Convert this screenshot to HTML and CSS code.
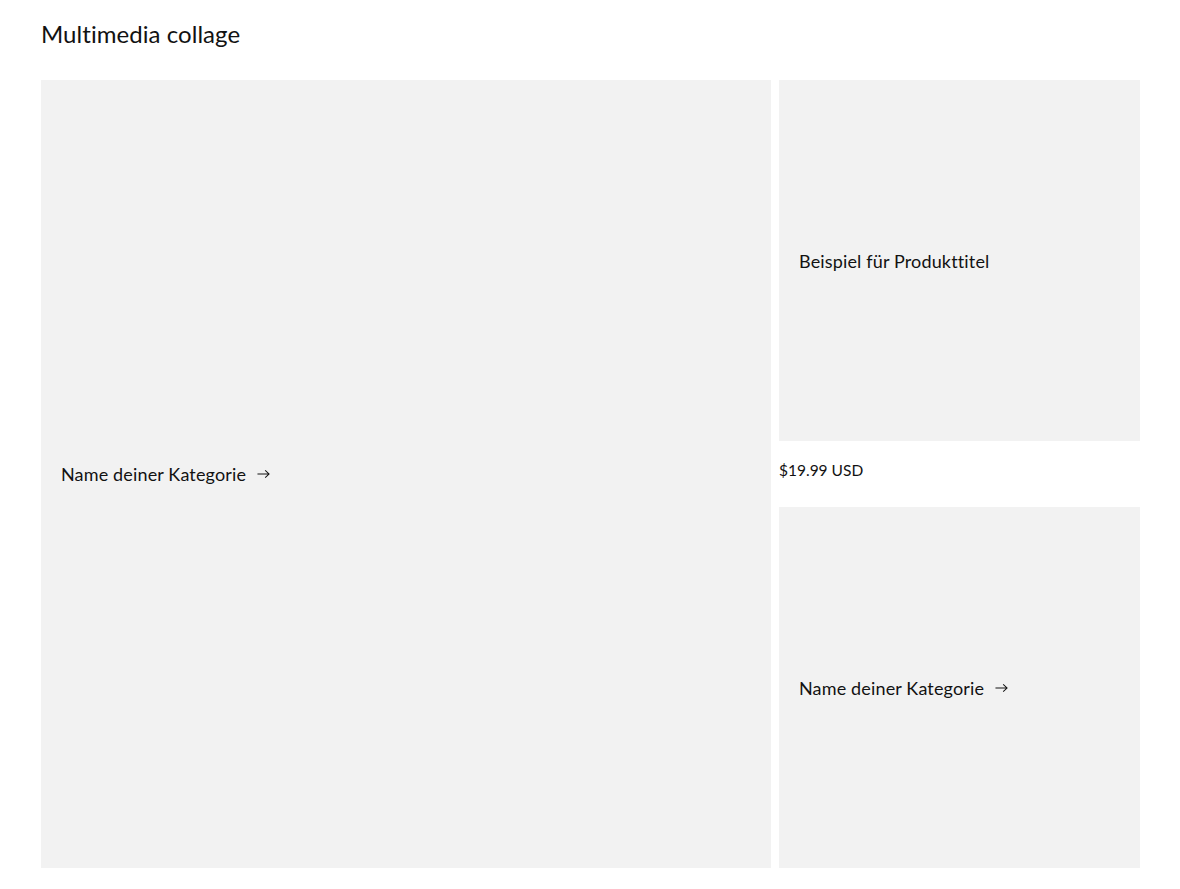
FILE: index.html
```html
<!DOCTYPE html>
<html lang="de">
<head>
<meta charset="utf-8">
<title>Multimedia collage</title>
<link rel="stylesheet" href="styles.css">
</head>
<body>
<section class="collage-section">
  <h2 class="title">Multimedia collage</h2>
  <div class="collage">
    <a class="card card-large" href="#">
      <span class="card-label">Name deiner Kategorie
        <svg class="arrow" viewBox="0 0 14 10" width="13" height="10" aria-hidden="true"><path d="M0.5 5H13M8.8 1L13 5L8.8 9" fill="none" stroke="currentColor" stroke-width="1.1"/></svg>
      </span>
    </a>
    <div class="side">
      <a class="card card-square" href="#">
        <span class="card-label">Beispiel für Produkttitel</span>
      </a>
      <div class="price">$19.99 USD</div>
      <a class="card card-square" href="#">
        <span class="card-label">Name deiner Kategorie
          <svg class="arrow" viewBox="0 0 14 10" width="13" height="10" aria-hidden="true"><path d="M0.5 5H13M8.8 1L13 5L8.8 9" fill="none" stroke="currentColor" stroke-width="1.1"/></svg>
        </span>
      </a>
    </div>
  </div>
</section>
</body>
</html>
```

FILE: styles.css
```css
* { box-sizing: border-box; }
html, body { margin: 0; padding: 0; background: #ffffff; }
body {
  font-family: Lato, "Noto Sans", sans-serif;
  color: #121212;
}
.collage-section {
  padding: 0 40px 0 41px;
}
.title {
  margin: 0;
  padding-top: 16px;
  height: 80px;
  font-size: 24px;
  font-weight: 400;
  letter-spacing: 0.05px;
  line-height: 36px;
}
.collage {
  display: grid;
  grid-template-columns: 730px 361px;
  column-gap: 8px;
  height: 788px;
}
.card {
  display: flex;
  align-items: center;
  padding: 0 20px;
  background: #f2f2f2;
  color: #121212;
  text-decoration: none;
}
.card-label {
  display: inline-flex;
  align-items: center;
  gap: 11px;
  font-size: 18px;
  letter-spacing: 0.15px;
  line-height: 28px;
}
.arrow { flex: none; }
.side {
  display: flex;
  flex-direction: column;
}
.card-square { height: 361px; }
.price {
  height: 66px;
  display: flex;
  align-items: center;
  font-size: 15.5px;
  letter-spacing: 0;
  padding-bottom: 8px;
}
```
